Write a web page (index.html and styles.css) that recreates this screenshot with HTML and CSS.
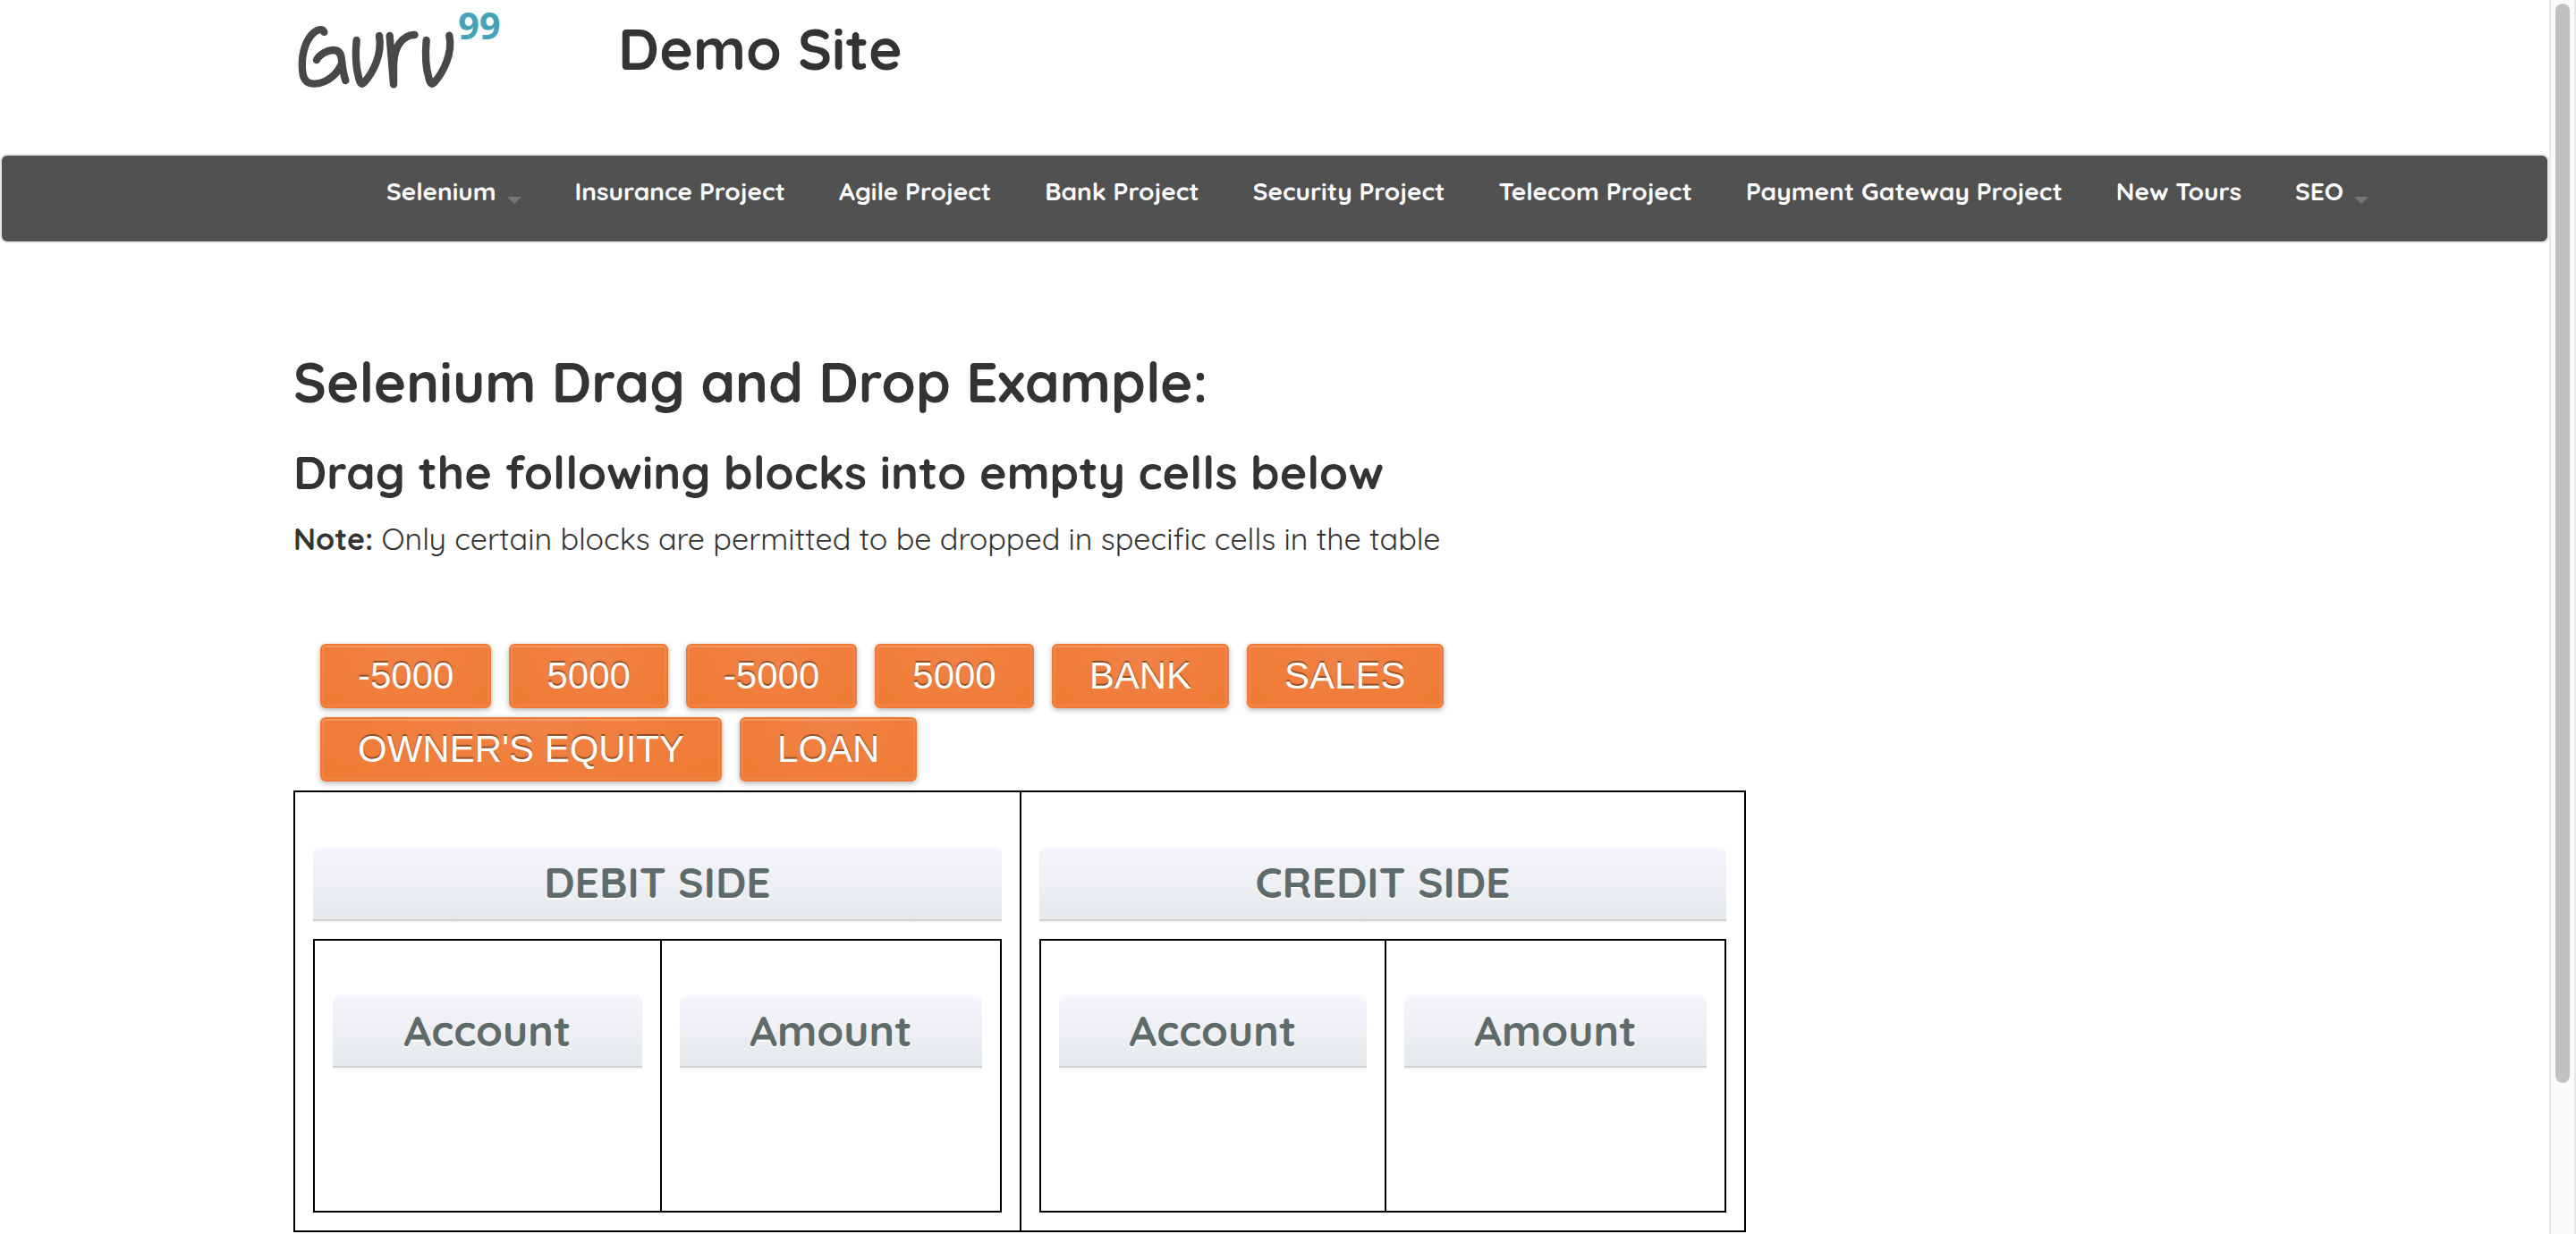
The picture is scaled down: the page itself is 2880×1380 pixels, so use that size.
FILE: index.html
```html
<!DOCTYPE html>
<html lang="en">
<head>
<meta charset="utf-8">
<title>Guru99 Demo Site</title>
<link rel="stylesheet" href="styles.css">
</head>
<body>
<div class="viewport">
  <div class="page">
    <header class="wrap masthead">
      <a class="logo" href="#">
        <svg viewBox="9 -15 726 330" width="242" height="110" role="img" aria-label="Guru99">
          <g fill="none" stroke="#484848" stroke-width="25" stroke-linecap="round" stroke-linejoin="round">
            <path d="M112 93C110 80 88 81 70 102C45 130 34 180 40 228C44 258 60 267 82 266C125 263 155 232 168 205"/>
            <path d="M87 186C98 166 122 154 142 153C160 153 168 163 170 180C173 210 177 235 184 255"/>
            <path d="M221 120C216 165 220 215 228 245C232 264 238 270 246 262C275 230 308 170 297 105"/>
            <path d="M332 105C336 160 341 215 345 268C347 215 338 170 365 130C382 108 398 101 416 102"/>
            <path d="M455 120C451 165 454 215 463 245C467 264 473 270 481 262C510 230 545 165 532 104"/>
          </g>
          <text x="562" y="116" class="logo-number">99</text>
        </svg>
      </a>
      <h2 class="site-name">Demo Site</h2>
    </header>

    <nav class="navbar" aria-label="Projects">
      <ul class="wrap menu">
        <li><a class="has-menu" href="#">Selenium</a></li>
        <li><a href="#">Insurance Project</a></li>
        <li><a href="#">Agile Project</a></li>
        <li><a href="#">Bank Project</a></li>
        <li><a href="#">Security Project</a></li>
        <li><a href="#">Telecom Project</a></li>
        <li><a href="#">Payment Gateway Project</a></li>
        <li><a href="#">New Tours</a></li>
        <li><a class="has-menu" href="#">SEO</a></li>
      </ul>
    </nav>

    <main class="wrap content">
      <h1>Selenium Drag and Drop Example:</h1>
      <h2>Drag the following blocks into empty cells below</h2>
      <p class="note"><b>Note:</b> Only certain blocks are permitted to be dropped in specific cells in the table</p>

      <div class="exercise">
        <div class="blocks">
          <button type="button" draggable="true">-5000</button>
          <button type="button" draggable="true">5000</button>
          <button type="button" draggable="true">-5000</button>
          <button type="button" draggable="true">5000</button>
          <button type="button" draggable="true">BANK</button>
          <button type="button" draggable="true">SALES</button>
          <button type="button" draggable="true">OWNER'S EQUITY</button>
          <button type="button" draggable="true">LOAN</button>
        </div>

        <table class="ledger">
          <thead>
            <tr>
              <th scope="col"><div class="heading">DEBIT SIDE</div></th>
              <th scope="col"><div class="heading">CREDIT SIDE</div></th>
            </tr>
          </thead>
          <tbody>
            <tr>
              <td>
                <table class="side">
                  <thead>
                    <tr>
                      <th scope="col"><div class="heading">Account</div></th>
                      <th scope="col" class="amount"><div class="heading">Amount</div></th>
                    </tr>
                  </thead>
                  <tbody><tr><td></td><td></td></tr></tbody>
                </table>
              </td>
              <td>
                <table class="side">
                  <thead>
                    <tr>
                      <th scope="col"><div class="heading">Account</div></th>
                      <th scope="col" class="amount"><div class="heading">Amount</div></th>
                    </tr>
                  </thead>
                  <tbody><tr><td></td><td></td></tr></tbody>
                </table>
              </td>
            </tr>
          </tbody>
        </table>
      </div>
    </main>
  </div>
  <div class="scrollbar" aria-hidden="true"><div class="thumb"></div></div>
</div>
</body>
</html>
```
FILE: styles.css
```css
* { box-sizing: border-box; }

body {
  margin: 0;
  background: #fff;
  color: #333;
  font-family: Quicksand, Lato, sans-serif;
}

h1, h2, p, ul { margin: 0; padding: 0; }

.viewport { display: flex; }
.page { flex: 1; min-width: 0; }

.wrap {
  width: 100%;
  max-width: 2194px;
  margin: 0 auto;
}

/* Header */
.masthead {
  display: flex;
  align-items: flex-start;
  gap: 121px;
  min-height: 172px;
}
.logo { display: block; }
.logo svg { display: block; overflow: visible; }
.logo-number {
  fill: #44a3b8;
  font-family: "Open Sans", sans-serif;
  font-size: 124px;
  font-weight: 700;
}
.site-name {
  padding-top: 14px;
  font-size: 64px;
  line-height: 80px;
}

/* Navigation */
.navbar {
  padding: 22px 0 38px;
  border: 2px solid #e7e7e7;
  border-radius: 8px;
  background: #515151;
}
.menu {
  display: flex;
  gap: 60px;
  padding-left: 104px;
  list-style: none;
}
.menu a {
  display: flex;
  align-items: center;
  gap: 12px;
  color: #fff;
  font-size: 28px;
  font-weight: 700;
  line-height: 36px;
  text-decoration: none;
  white-space: nowrap;
}
.has-menu::after {
  content: "";
  margin-top: 20px;
  border: 8px solid transparent;
  border-top-color: #777;
  border-bottom: 0;
}

/* Content */
.content { padding-top: 116px; }
h1 { font-size: 62px; line-height: 78px; }
.content h2 { margin-top: 30px; font-size: 52px; line-height: 64px; }
.note { margin-top: 22px; font-size: 34px; font-weight: 400; line-height: 42px; }

.exercise { max-width: 1624px; margin-top: 96px; }

.blocks {
  display: flex;
  flex-wrap: wrap;
  gap: 10px 20px;
  padding: 0 30px;
}
.blocks button {
  height: 72px;
  padding: 0 40px;
  border: 2px solid #ee7a35;
  border-radius: 6px;
  background: radial-gradient(ellipse at 50% 0, #f28347, #ee7a33);
  box-shadow: 0 2px 6px rgba(0, 0, 0, .3), inset 0 2px 0 rgba(255, 255, 255, .12), inset 0 0 0 2px rgba(255, 255, 255, .08);
  color: #fff;
  font: 42px/68px "Liberation Sans", Arial, sans-serif;
  text-shadow: 0 -2px 1px rgba(0, 0, 0, .4);
  cursor: move;
}

/* Ledger */
table {
  width: 100%;
  border: 2px solid #000;
  border-spacing: 0;
  table-layout: fixed;
}
th, td { padding: 0; }
th + th, td + td { border-left: 2px solid #000; }

.ledger { margin-top: 10px; }
.ledger > thead th { padding: 60px 20px 20px; }
.ledger > tbody > tr > td { padding: 0 20px 20px; }

.side .amount { width: 380px; }
.side > thead th { padding: 60px 20px 0; }
.ledger .side > tbody td { height: 160px; }

.heading {
  padding: 10px 0 12px;
  border-bottom: 2px solid #d0d0d0;
  border-radius: 8px 8px 0 0;
  background: linear-gradient(#f6f6fd, #e5e9eb);
  box-shadow: 0 2px 0 #f6f6f6, inset 0 2px 0 #fafaff;
  color: #5e6b6b;
  font-size: 48px;
  line-height: 60px;
  text-align: center;
  text-shadow: 0 2px 0 #fff;
}
.side .heading { padding-bottom: 10px; }

/* Scrollbar */
.scrollbar {
  width: 30px;
  height: 100vh;
  padding: 4px;
  border: 2px solid #e8e8e8;
  border-width: 0 2px;
  background: #fafafa;
}
.thumb {
  width: 16px;
  height: 88%;
  margin: 0 auto;
  border-radius: 8px;
  background: #c1c1c1;
}
```
